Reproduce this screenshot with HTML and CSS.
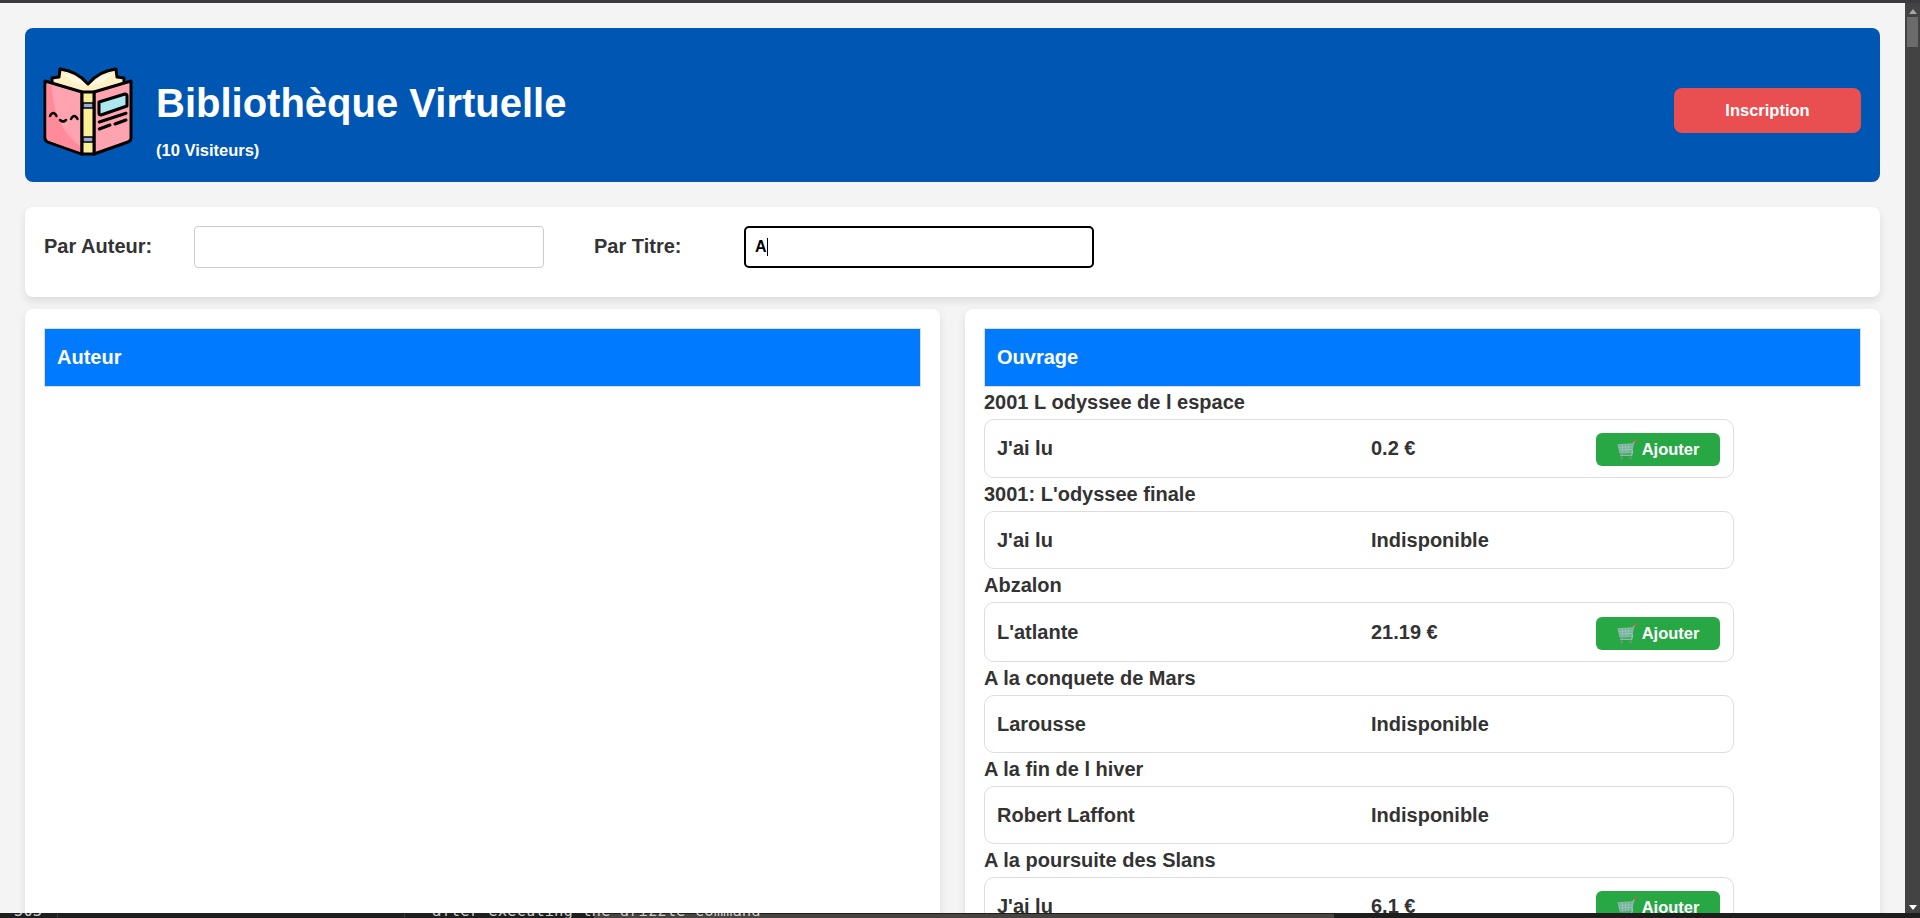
FILE: index.html
```html
<!DOCTYPE html>
<html lang="fr">
<head>
    <meta charset="UTF-8">
    <title>Bibliothèque Virtuelle</title>
    <link rel="stylesheet" href="styles.css">
</head>
<body>

<div class="top-strip"></div>

<div class="window">
    <div class="page">

        <header class="banner">
            <svg class="logo" viewBox="0 0 90 90">
                <path d="M9 20 L9 12 L16 11 L17 3 Q34 5 45 18 Q56 5 73 3 L74 11 L81 12 L81 20 L45 30Z" fill="#fdf0c4" stroke="#000" stroke-width="3" stroke-linejoin="round"/>
                <path d="M19 7 Q34 9 44 20 L30 16Z" fill="#fff8e2"/>
                <path d="M71 7 Q56 9 46 20 L60 16Z" fill="#fff8e2"/>
                <path d="M2 15 L39 26 L39 88 L5 76 Q2 75 2 72Z" fill="#ffa3b1" stroke="#000" stroke-width="3" stroke-linejoin="round"/>
                <path d="M88 15 L51 26 L51 88 L85 76 Q88 75 88 72Z" fill="#ffa3b1" stroke="#000" stroke-width="3" stroke-linejoin="round"/>
                <path d="M9 20 Q10 60 37 80 L37 86 L6 75 Q3.500 74 3.500 71 L3.500 18Z" fill="#ff8a9a"/>
                <rect x="39" y="26" width="12" height="62" fill="#fbef96" stroke="#000" stroke-width="3"/>
                <rect x="40" y="37" width="10" height="5" fill="#9aa8e0" stroke="#000" stroke-width="1.500"/>
                <rect x="40" y="71" width="10" height="5" fill="#9aa8e0" stroke="#000" stroke-width="1.500"/>
                <path d="M56 36 L82 28 Q84 28 84 30 L84 40 L58 49 Q56 49 56 47Z" fill="#aee6ef" stroke="#000" stroke-width="3" stroke-linejoin="round"/>
                <path d="M56.300 56 L83 47.300 M56.300 63 L67 59 M72 58 L83 54" fill="none" stroke="#000" stroke-width="3" stroke-linecap="round"/>
                <path d="M7 50 Q10.300 44 13.500 50 M17 54 Q20 57 23 54 M28 53 Q31.300 47 34.500 53" fill="none" stroke="#000" stroke-width="2.500" stroke-linecap="round"/>
            </svg>
            <div class="banner-text">
                <h1>Bibliothèque Virtuelle</h1>
                <p>(10 Visiteurs)</p>
            </div>
            <button class="btn-inscription">Inscription</button>
        </header>

        <section class="search card">
            <label for="auteur">Par Auteur:</label>
            <input type="text" id="auteur">
            <label for="titre" class="label-titre">Par Titre:</label>
            <div class="input-focus">A<span class="caret"></span></div>
        </section>

        <div class="columns">
            <section class="card panel">
                <div class="panel-head">Auteur</div>
            </section>

            <section class="card panel">
                <div class="panel-head">Ouvrage</div>

                <div class="book-title">2001 L odyssee de l espace</div>
                <div class="book-row has-btn">
                    <span class="editor">J'ai lu</span>
                    <span class="price">0.2 €</span>
                    <button class="btn-add"><svg class="cart"><use href="#cart"/></svg>Ajouter</button>
                </div>

                <div class="book-title">3001: L'odyssee finale</div>
                <div class="book-row">
                    <span class="editor">J'ai lu</span>
                    <span class="price">Indisponible</span>
                </div>

                <div class="book-title">Abzalon</div>
                <div class="book-row has-btn tall">
                    <span class="editor">L'atlante</span>
                    <span class="price">21.19 €</span>
                    <button class="btn-add"><svg class="cart"><use href="#cart"/></svg>Ajouter</button>
                </div>

                <div class="book-title">A la conquete de Mars</div>
                <div class="book-row">
                    <span class="editor">Larousse</span>
                    <span class="price">Indisponible</span>
                </div>

                <div class="book-title">A la fin de l hiver</div>
                <div class="book-row">
                    <span class="editor">Robert Laffont</span>
                    <span class="price">Indisponible</span>
                </div>

                <div class="book-title">A la poursuite des Slans</div>
                <div class="book-row has-btn">
                    <span class="editor">J'ai lu</span>
                    <span class="price">6.1 €</span>
                    <button class="btn-add"><svg class="cart"><use href="#cart"/></svg>Ajouter</button>
                </div>
            </section>
        </div>

    </div>

    <div class="scrollbar">
        <span class="arrow-up"></span>
        <span class="thumb"></span>
        <span class="arrow-down"></span>
    </div>
</div>

<div class="bottom-strip">
    <span class="term-tab"></span>
    <span class="term-divider divider-a"></span>
    <span class="term-divider divider-b"></span>
    <span class="term-num">503</span>
    <span class="term-line">after executing the drizzle command</span>
</div>

<svg class="defs" width="0" height="0">
    <symbol id="cart" viewBox="0 0 20 20">
        <path d="M1 5.500 L15.500 4.500 L14 13 L3 13.500Z" fill="#6fb58e" stroke="#8fb4b4" stroke-width="1"/>
        <path d="M5 5 L5.500 13 M8 5 L8 13 M11 5 L10.500 13 M2 8 L15 7.500 M2.500 10.500 L14.500 10" stroke="#9cc4c0" stroke-width=".8"/>
        <path d="M15.500 5 L16.500 2" stroke="#8fb4b4" stroke-width="1.200"/>
        <path d="M16.500 2 L19 .8" stroke="#e0503c" stroke-width="1.600"/>
        <path d="M3 15.500 L14 15.500 L15 11" fill="none" stroke="#a8c8c4" stroke-width="1"/>
        <circle cx="4.500" cy="18" r="1.300" fill="#7d8f80"/>
        <circle cx="13" cy="18" r="1.300" fill="#7d8f80"/>
    </symbol>
</svg>

</body>
</html>
```

FILE: styles.css
```css
* {
    box-sizing: border-box;
}

body {
    margin: 0;
    height: 100vh;
    display: flex;
    flex-direction: column;
    overflow: hidden;
    background-color: #f4f4f4;
    color: #333;
    font-family: "Liberation Sans", Arial, sans-serif;
    font-weight: bold;
}

.defs {
    position: absolute;
}

.top-strip {
    height: 3px;
    flex-shrink: 0;
    background-color: #3b3b3d;
}

.window {
    flex: 1;
    min-height: 0;
    display: flex;
}

.page {
    flex: 1;
    min-width: 0;
    overflow: hidden;
    padding: 25px 25px 0;
}

/* banner */
.banner {
    height: 154px;
    display: flex;
    align-items: center;
    padding: 0 19px;
    background-color: #0056b3;
    border-radius: 8px;
    color: #fff;
}

.logo {
    width: 90px;
    height: 90px;
    flex-shrink: 0;
    margin: 12px 23px 0 -1px;
}

.banner-text {
    flex: 1;
    padding-top: 28px;
}

.banner-text h1 {
    margin: 0;
    font-size: 40px;
    line-height: 46px;
}

.banner-text p {
    margin: 15px 0 0;
    font-size: 16.500px;
    line-height: 18px;
}

.btn-inscription {
    width: 187px;
    height: 45px;
    margin-top: 11px;
    border: none;
    border-radius: 8px;
    background-color: #e94e51;
    color: #fff;
    font: inherit;
    font-size: 16.500px;
}

/* search */
.card {
    background-color: #fff;
    border-radius: 8px;
    box-shadow: 0 4px 8px rgba(0, 0, 0, 0.1);
}

.search {
    height: 90px;
    margin-top: 25px;
    padding: 19px 19px 0;
    display: flex;
    align-items: flex-start;
    font-size: 20px;
}

.search label {
    width: 150px;
    line-height: 40px;
}

.search .label-titre {
    width: 150px;
    margin-left: 50px;
}

.search input {
    width: 350px;
    height: 42px;
    border: 1px solid #ccc;
    border-radius: 4px;
    outline: none;
}

.input-focus {
    width: 350px;
    height: 42px;
    display: flex;
    align-items: center;
    padding-left: 9px;
    border: 2px solid #000;
    border-radius: 5px;
    color: #000;
    font-size: 16px;
}

.caret {
    width: 1px;
    height: 18px;
    background-color: #000;
}

/* columns */
.columns {
    display: grid;
    grid-template-columns: 915px 915px;
    column-gap: 25px;
    margin-top: 12px;
}

.panel {
    height: 640px;
    padding: 19px;
}

.panel-head {
    height: 59px;
    margin-bottom: -1px;
    display: flex;
    align-items: center;
    padding-left: 12px;
    background-color: #007bff;
    border: 1px solid #ddd;
    color: #fff;
    font-size: 20px;
}

.book-title {
    height: 33px;
    font-size: 20px;
    line-height: 32px;
}

.book-row {
    width: 750px;
    height: 58px;
    display: flex;
    align-items: center;
    padding: 0 12px;
    border: 1px solid #ddd;
    border-radius: 10px;
    font-size: 20px;
}

.book-row.has-btn {
    height: 59px;
}

.book-row.tall {
    height: 60px;
}

.editor {
    width: 374px;
}

.price {
    width: 225px;
}

.btn-add {
    width: 124px;
    height: 33px;
    margin-top: 2px;
    display: flex;
    align-items: center;
    justify-content: center;
    border: none;
    border-radius: 6px;
    background-color: #28a745;
    color: #fff;
    font: inherit;
    font-size: 16.500px;
}

.cart {
    width: 21px;
    height: 21px;
    margin-right: 4px;
}

/* fake scrollbar of the window */
.scrollbar {
    width: 15px;
    flex-shrink: 0;
    display: flex;
    flex-direction: column;
    align-items: center;
    background-color: #434343;
}

.arrow-up {
    margin-top: 6px;
    border: 4px solid transparent;
    border-top: none;
    border-bottom: 5px solid #a5a5a5;
}

.thumb {
    width: 11px;
    height: 30px;
    margin-top: 3px;
    background-color: #6b6b6b;
}

.arrow-down {
    margin-top: auto;
    margin-bottom: 3px;
    border: 4px solid transparent;
    border-bottom: none;
    border-top: 5px solid #fff;
}

/* terminal peeking under the window */
.bottom-strip {
    height: 5px;
    flex-shrink: 0;
    position: relative;
    overflow: hidden;
    background-color: #1e1e1e;
    color: #ccc;
    font-family: "DejaVu Sans Mono", monospace;
    font-weight: normal;
    font-size: 15.600px;
    line-height: 14px;
}

.term-num {
    position: absolute;
    left: 14px;
    top: -9px;
}

.term-line {
    position: absolute;
    left: 432px;
    top: -9px;
}

.term-tab {
    position: absolute;
    left: 594px;
    top: 1px;
    width: 740px;
    height: 4px;
    background-color: #4a4440;
}

.term-divider {
    position: absolute;
    top: 0;
    width: 1px;
    height: 5px;
    background-color: #3a3a3a;
}

.divider-a {
    left: 57px;
}

.divider-b {
    left: 404px;
}
```
